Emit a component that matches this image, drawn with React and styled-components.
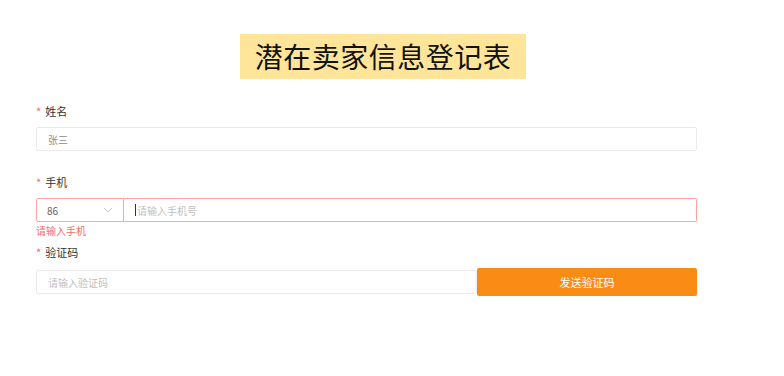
import styled, { createGlobalStyle } from 'styled-components'

const GlobalStyle = createGlobalStyle`
body {
  margin: 0;
  background: #fff;
  font-family: "Noto Sans CJK SC", "Liberation Sans", sans-serif;
}
`

const Page = styled.div`
width: 784px;
height: 376px;
padding: 34px 87px 0 36px;
box-sizing: border-box;
`

const Header = styled.div`
display: flex;
justify-content: center;
padding-left: 33px;
margin-bottom: 24px;
`

const Title = styled.h1`
margin: 0;
height: 45px;
padding: 0 15px;
background: #ffe599;
color: #111;
font-size: 28px;
font-weight: 400;
line-height: 45px;
letter-spacing: 0.5px;
`

const Field = styled.div`
display: flex;
flex-direction: column;
margin-bottom: ${props => props.gap || 24}px;
`

const Label = styled.label`
font-size: 11px;
color: #333;
line-height: 16px;
margin-bottom: 8px;
&::before {
  content: "*";
  color: #f5222d;
  opacity: 0.7;
  margin-right: 4px;
}
`

const Input = styled.div`
flex: ${props => props.flex || 'none'};
height: 24px;
box-sizing: border-box;
border: 1px solid ${props => props.error ? '#ffa39e' : '#ebebeb'};
border-radius: 2px;
padding: 0 11px;
display: flex;
align-items: center;
font-size: 10px;
color: ${props => props.muted ? '#bfbfbf' : '#8c8c8c'};
`

const Row = styled.div`
display: flex;
align-items: center;
`

const Select = styled.div`
width: 88px;
height: 24px;
box-sizing: border-box;
border: 1px solid #ffa39e;
border-radius: 2px 0 0 2px;
padding: 0 10px;
display: flex;
align-items: center;
justify-content: space-between;
font-size: 10px;
color: #666;
`

const PhoneInput = styled(Input)`
border-left: none;
border-radius: 0 2px 2px 0;
padding-left: 11px;
`

const Caret = styled.span`
width: 1px;
height: 12px;
background: #333;
margin-right: 1px;
`

const Error = styled.div`
font-size: 10px;
color: #f56c6c;
line-height: 14px;
margin-top: 2px;
`

const Button = styled.button`
width: 220px;
height: 28px;
border: none;
border-radius: 2px;
background: #fa8c16;
color: #fff;
font-family: inherit;
font-size: 11px;
`

export default function App() {
  return (
    <>
      <GlobalStyle />
      <Page>
        <Header>
          <Title>潜在卖家信息登记表</Title>
        </Header>
        <Field gap={23}>
          <Label>姓名</Label>
          <Input>张三</Input>
        </Field>
        <Field gap={6}>
          <Label>手机</Label>
          <Row>
            <Select>
              86
              <svg width="10" height="6" viewBox="0 0 10 6" fill="none">
                <path d="M1 1l4 4 4-4" stroke="#c8c8c8" strokeWidth="1" />
              </svg>
            </Select>
            <PhoneInput flex="1" error muted>
              <Caret />
              请输入手机号
            </PhoneInput>
          </Row>
          <Error>请输入手机</Error>
        </Field>
        <Field>
          <Label>验证码</Label>
          <Row>
            <Input flex="1" muted>请输入验证码</Input>
            <Button>发送验证码</Button>
          </Row>
        </Field>
      </Page>
    </>
  )
}
